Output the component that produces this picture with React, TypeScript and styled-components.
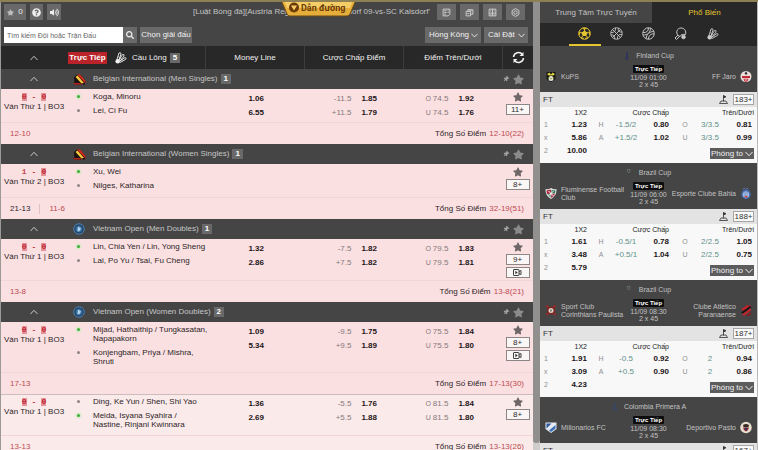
import React from 'react';
import styled, { createGlobalStyle, css } from 'styled-components';
import { FaStar, FaQuestionCircle, FaSearch, FaThumbtack, FaVolumeUp } from 'react-icons/fa';

const GlobalStyle = createGlobalStyle`
  *, *::before, *::after { box-sizing: border-box; }
  body { margin: 0; background: #444; font-family: 'Liberation Sans', Arial, sans-serif; font-size: 8px; line-height: 10px; }
  button, input, select { font: inherit; margin: 0; padding: 0; border: 0; border-radius: 0; }
  button { cursor: pointer; background: none; color: inherit; }
  svg { display: block; flex: none; }
  h2, h3, p { margin: 0; font: inherit; }
`;

/* ---------- page shell ---------- */

const Page = styled.div`
  position: relative;
  height: 100vh;
  overflow: hidden;
  display: grid;
  grid-template-columns: minmax(0, 1fr) 7px minmax(180px, 218px);
  border-top: 2px solid #8d8054;
`;

const Main = styled.main`
  min-width: 0;
  overflow: hidden;
  display: flex;
  flex-direction: column;
  border-left: 1px solid #9c9a96;
  background: #454545;
`;

const ScrollGutter = styled.div`
  background: #cfcccb;
  padding-bottom: 7px;
  display: flex;
`;

const ScrollThumb = styled.div`
  flex: 1;
  border-radius: 0 0 3px 3px;
  background: #91908e;
`;

const Ribbon = styled.button`
  position: absolute;
  top: -2px;
  left: 281px;
  width: 75px;
  height: 17px;
  color: #6b3a05;
  font-family: Roboto, sans-serif;
  font-size: 9px;
  font-weight: 700;
`;

const RibbonShape = styled.svg`
  position: absolute;
  inset: 0;
`;

const RibbonText = styled.span`
  position: relative;
  display: block;
  padding: 0 0 2px 20px;
  text-align: left;
  white-space: nowrap;
`;

/* ---------- toolbars ---------- */

const Toolbar = styled.div`
  display: flex;
  align-items: center;
  gap: 4px;
  padding: 2px 8px 0 3px;
`;

const SearchBar = styled(Toolbar)`
  gap: 3px;
  padding: 7px 5px 3px 3px;
`;

const ToolButton = styled.button<{ $w: number }>`
  width: ${(p) => p.$w}px;
  height: 16px;
  display: flex;
  align-items: center;
  justify-content: center;
  gap: 4px;
  flex: none;
  background: #696969;
  color: #efefef;
  white-space: nowrap;
`;

const Marquee = styled.div`
  flex: 1;
  min-width: 0;
  display: flex;
  justify-content: space-between;
  padding: 0 3px 0 128px;
  color: #c4c4c4;
  white-space: nowrap;
`;

const SearchForm = styled.form`
  display: flex;
`;

const SearchInput = styled.input`
  width: 119px;
  height: 16px;
  padding: 0 3px;
  background: #fff;
  color: #333;
  font-size: 7px;
  outline: none;
  &::placeholder { color: #666; opacity: 1; }
`;

const Spacer = styled.div`
  flex: 1;
`;

const SelectWrap = styled.label<{ $w: number }>`
  position: relative;
  width: ${(p) => p.$w}px;
  height: 16px;
  color: #f0f0f0;
  svg { position: absolute; right: 3px; top: 5px; pointer-events: none; }
`;

const Select = styled.select`
  appearance: none;
  width: 100%;
  height: 100%;
  padding: 0 0 0 4px;
  background: #696969;
  color: #f0f0f0;
`;

/* ---------- odds list ---------- */

const columns = css`
  display: grid;
  grid-template-columns: 204px repeat(3, minmax(0, 1fr)) 31px;
`;

const ListHeader = styled.div`
  ${columns}
  height: 23px;
  flex: none;
  background: #282828;
  color: #f1f1f1;
`;

const HeaderCell = styled.div`
  display: flex;
  align-items: center;
  justify-content: center;
  border-left: 1px solid #3d3d3d;
`;

const HeaderTitle = styled.div`
  display: flex;
  align-items: center;
`;

const CollapseButton = styled.button`
  width: 66px;
  height: 16px;
  display: flex;
  align-items: center;
  justify-content: center;
  flex: none;
  color: #c9c9c9;
`;

const LiveTag = styled.span`
  width: 39px;
  margin: 0 8px 0 1px;
  background: #b92329;
  color: #fff;
  font-weight: 700;
  text-align: center;
  line-height: 12px;
`;

const Count = styled.span`
  margin-left: 3px;
  padding: 0 3px;
  background: #696969;
  color: #fff;
  font-weight: 700;
`;

const SportName = styled.span`
  margin-left: 5px;
`;

const GroupBar = styled.div`
  display: flex;
  align-items: center;
  height: 20px;
  flex: none;
  padding-right: 9px;
  background: #454545;
  color: #c6c6c6;
`;

const GroupIcon = styled.span`
  width: 26px;
  padding-left: 6px;
`;

const GroupTools = styled.div`
  margin-left: auto;
  display: flex;
  align-items: center;
  gap: 4px;
  color: #a2a2a2;
`;

const IconButton = styled.button`
  display: block;
  color: inherit;
`;

const Match = styled.article<{ $pale?: boolean }>`
  flex: none;
  background: ${(p) => (p.$pale ? '#fbeaea' : '#fbe0e2')};
  color: #2b2426;
  & + & { box-shadow: inset 0 1px #cdbcbd; }
`;

const MatchBody = styled.div`
  ${columns}
  min-height: 33px;
`;

const MatchInfo = styled.div`
  display: grid;
  grid-template-columns: 66px minmax(0, 1fr);
`;

const ScoreBlock = styled.div`
  padding-top: 4px;
  display: flex;
  flex-direction: column;
  align-items: center;
  gap: 1px;
  white-space: nowrap;
`;

const Score = styled.div`
  display: flex;
  gap: 5px;
  color: #c4323b;
  font-family: 'Liberation Mono', monospace;
  font-weight: 700;
  line-height: 8px;
`;

const Digit = styled.span<{ $plain: boolean }>`
  line-height: 7px;
  background: ${(p) => (p.$plain ? 'transparent' : '#e3949b')};
  color: ${(p) => (p.$plain ? '#c24a50' : '#c0202c')};
`;

const Players = styled.div`
  display: flex;
  flex-direction: column;
  gap: 5px;
  padding: 3px 0 6px 10px;
`;

const Player = styled.div<{ $serving: boolean }>`
  display: flex;
  gap: 13px;
  line-height: 9px;
  &::before {
    content: '';
    flex: none;
    width: 3px;
    height: 3px;
    margin-top: 3px;
    border-radius: 50%;
    background: ${(p) => (p.$serving ? '#3fae3a' : '#8f8385')};
    box-shadow: ${(p) => (p.$serving ? '0 0 2px 1px #c2ecb8' : 'none')};
  }
`;

const PlayerName = styled.span`
  flex: none;
  max-width: 115px;
`;

const OddsCell = styled.div<{ $end: number }>`
  padding: 3px ${(p) => p.$end}px 0 0;
`;

const OddsLine = styled.div`
  display: flex;
  justify-content: flex-end;
  gap: 10px;
  line-height: 14px;
`;

const Handicap = styled.span`
  color: #84797b;
  white-space: nowrap;
`;

const Side = styled.small`
  font-size: 7px;
  margin-right: 2px;
`;

const Price = styled.button`
  color: #1c1517;
  font-weight: 700;
  line-height: inherit;
`;

const MatchTools = styled.div`
  display: flex;
  flex-direction: column;
  align-items: center;
  gap: 2px;
  padding: 3px 0 2px;
  color: #6f6668;
`;

const MoreButton = styled.button`
  width: 24px;
  height: 11px;
  display: flex;
  align-items: center;
  justify-content: center;
  border: 1px solid #8d8687;
  background: #fbf6f6;
  color: #2c2c2c;
`;

const MatchFooter = styled.div`
  display: flex;
  align-items: center;
  height: 22px;
  padding: 0 9px;
  border-top: 1px solid #f3d4d7;
`;

const GameScore = styled.span<{ $done?: boolean }>`
  color: ${(p) => (p.$done ? '#2b2426' : '#bb4a50')};
  & + & { margin-left: 9px; padding-left: 9px; border-left: 1px solid #e3bfc2; }
`;

const Total = styled.span`
  margin-left: auto;
  b { font-weight: 400; color: #bb4a50; margin-left: 1px; }
`;

/* ---------- side panel ---------- */

const SidePanel = styled.aside`
  overflow: hidden;
  background: #454545;
  border-right: 1px solid #b9b9b9;
`;

const Tabs = styled.div`
  display: grid;
  grid-template-columns: 112px 1fr;
`;

const Tab = styled.button<{ $active?: boolean }>`
  height: 21px;
  background: ${(p) => (p.$active ? '#282828' : '#454545')};
  color: ${(p) => (p.$active ? '#e6c62f' : '#c4c4c4')};
`;

const SportNav = styled.nav`
  display: flex;
  justify-content: center;
  height: 23px;
  background: #282828;
`;

const SportButton = styled.button<{ $active?: boolean }>`
  width: 32px;
  display: flex;
  align-items: center;
  justify-content: center;
  color: ${(p) => (p.$active ? '#e6c62f' : '#c9c9c9')};
  border-bottom: 2px solid ${(p) => (p.$active ? '#e6c62f' : 'transparent')};
`;

const CardHead = styled.header`
  padding: 5px 5px 4px;
  background: #454545;
  color: #c2c2c2;
  font-size: 7px;
`;

const League = styled.h3`
  display: flex;
  align-items: center;
  justify-content: center;
  gap: 6px;
  line-height: 9px;
  margin-bottom: 5px;
`;

const Versus = styled.div`
  display: grid;
  grid-template-columns: minmax(0, 1fr) 34px minmax(0, 1fr);
  gap: 2px;
  height: 23px;
`;

const Team = styled.div<{ $away?: boolean }>`
  display: flex;
  flex-direction: ${(p) => (p.$away ? 'row-reverse' : 'row')};
  align-items: center;
  gap: 4px;
  line-height: 8px;
  text-align: ${(p) => (p.$away ? 'right' : 'left')};
`;

const Kickoff = styled.div`
  display: flex;
  flex-direction: column;
  align-items: center;
  line-height: 7px;
  white-space: nowrap;
`;

const LiveBadge = styled.span`
  padding: 0 2px;
  margin-bottom: 1px;
  border-radius: 1px;
  background: #0d0d0d;
  color: #fff;
  font-size: 6px;
  font-weight: 700;
  line-height: 8px;
`;

const PeriodBar = styled.div`
  display: flex;
  align-items: center;
  gap: 5px;
  height: 15px;
  padding: 0 3px;
  background: #e3e3e3;
  color: #333;
`;

const MarketCount = styled.button`
  width: 21px;
  height: 11px;
  border: 1px solid #a5a5a5;
  background: #fafafa;
  color: #333;
  white-space: nowrap;
`;

const OddsTable = styled.table`
  width: 100%;
  table-layout: fixed;
  border-collapse: collapse;
  background: #f8f8f8;
  color: #222;
  th { font-weight: 400; font-size: 7px; height: 11px; line-height: 11px; padding: 0 1px 0 0; text-align: right; white-space: nowrap; }
  th:last-child { padding-right: 3px; }
  td { height: 13px; line-height: 13px; padding: 0; text-align: center; vertical-align: top; white-space: nowrap; }
  tr:last-child td { height: 19px; }
`;

const Mark = styled.td`
  color: #8f8f8f;
  font-size: 7px;
`;

const FirstMark = styled(Mark)`
  && { text-align: left; padding-left: 4px; }
`;

const Line = styled.td`
  color: #5f918a;
`;

const PriceCell = styled.td<{ $end?: number }>`
  && { text-align: right; padding-right: ${(p) => p.$end ?? 1}px; }
`;

const ExpandCell = styled.td`
  && { vertical-align: middle; padding-right: 3px; }
`;

const ExpandButton = styled.button`
  margin-left: auto;
  height: 11px;
  width: 44px;
  display: flex;
  align-items: center;
  justify-content: center;
  gap: 2px;
  background: #5c5c5c;
  color: #f1f1f1;
`;

/* ---------- drawings ---------- */

const Chevron = ({ up, size = 8 }: { up?: boolean; size?: number }) => (
  <svg width={size} height={size} viewBox="0 0 8 8" fill="none" stroke="currentColor" strokeWidth="1">
    <path d={up ? 'M0.5 6 L4 2.3 L7.5 6' : 'M0.5 2 L4 5.7 L7.5 2'} />
  </svg>
);

const Shuttle = ({ size = 12 }: { size?: number }) => (
  <svg width={size} height={size} viewBox="0 0 24 24" fill="none" stroke="currentColor" strokeWidth="1.8" strokeLinejoin="round">
    <path d="M4 15 L8 2 Q12 0 12 4 L8 16" />
    <path d="M8 16 L15 5 Q19 4 18 8 L10 18" />
    <path d="M10 18 L20 11 Q24 12 21 15 L10 21" />
    <path d="M6 9 L11 12 L15 17" strokeWidth="1.2" />
    <circle cx="5.5" cy="18.5" r="4.6" fill="currentColor" stroke="none" />
  </svg>
);

const SoccerBall = () => (
  <svg width="13" height="13" viewBox="0 0 26 26" fill="none" stroke="currentColor" strokeWidth="2">
    <circle cx="13" cy="13" r="11.5" />
    <path d="M13 8 L18 11.6 L16 17 H10 L8 11.6 Z" fill="currentColor" />
    <path d="M13 8 V4 M18 12 L22 10 M16 17 L19 21 M10 17 L7 21 M8 12 L4 10" />
    <path d="M9 2.5 L13 5 L17 2.5 Z M23.5 9 L22 14 L24 16 Z M2.5 9 L4 14 L2 16 Z M6 21 L11 22 L10 24 Z M20 21 L15 22 L16 24 Z" fill="currentColor" strokeWidth="1" />
  </svg>
);

const Basketball = () => (
  <svg width="13" height="13" viewBox="0 0 26 26" fill="none" stroke="currentColor" strokeWidth="1.8">
    <circle cx="13" cy="13" r="11.5" />
    <path d="M5 5 L21 21 M21 5 L5 21 M11 2 C12 7 9 12 2 11 M24 15 C18 14 14 18 15 24 M17 2.5 C15 7 19 11 24 10 M2 16 C7 15 11 19 9 24" />
  </svg>
);

const TennisBall = () => (
  <svg width="13" height="13" viewBox="0 0 26 26" fill="none" stroke="currentColor" strokeWidth="2">
    <circle cx="13" cy="13" r="11.5" />
    <path d="M2 11 C9 12 13 8 13 2 M17 2.5 C17 11 11 16 2.5 16 M24 14 C17 13 13 18 13 24 M8 23 C9 15 15 9 23.5 9" />
  </svg>
);

const Paddle = () => (
  <svg width="13" height="13" viewBox="0 0 26 26" fill="none" stroke="currentColor" strokeWidth="2">
    <path d="M8 17 C3 11 6 2 14 2 C21 2 25 8 23 15 C19 14 13 15 12 19 Z" />
    <path d="M8 16 L2 22 L5 25 L11 19" />
    <circle cx="19" cy="20" r="3.5" fill="currentColor" />
  </svg>
);

const Refresh = () => (
  <svg width="13" height="13" viewBox="0 0 26 26" fill="none" stroke="currentColor" strokeWidth="3">
    <path d="M3 12 A10 10 0 0 1 21 7 M23 14 A10 10 0 0 1 5 19" />
    <path d="M23 2 V10 H15 Z M3 24 V16 H11 Z" fill="currentColor" stroke="none" />
  </svg>
);

const VideoIcon = () => (
  <svg width="9" height="7" viewBox="0 0 18 14" fill="none" stroke="currentColor" strokeWidth="1.8">
    <rect x="1" y="1" width="11" height="12" rx="1" />
    <path d="M5 4 L9 7 L5 10 Z" fill="currentColor" strokeWidth="0.5" />
    <path d="M12 5 L16 3 V11 L12 9" />
  </svg>
);

const CornerFlag = () => (
  <svg width="9" height="9" viewBox="0 0 18 18" fill="none" stroke="#333" strokeWidth="1.6">
    <path d="M9 1 V13 M1 17 L4 12 H14 L17 17 Z" />
    <path d="M9 1 L14 3.5 L9 6 Z" fill="#333" />
  </svg>
);

const BelgianFlag = () => (
  <svg width="13" height="11" viewBox="0 0 26 22">
    <path d="M2 6 L8 1 L15 2 L25 15 L24 21 L3 21 Z" fill="#1a1311" />
    <path d="M8 1 L14 1 L25 14 L25 19 Z" fill="#d8281c" />
    <path d="M5 6 L9 3 L22 18 L17 19 Z" fill="#f5c93c" />
    <path d="M1 18 L13 18 L20 21 L2 21 Z" fill="#b81f1a" />
  </svg>
);

const VietnamOpen = () => (
  <svg width="12" height="12" viewBox="0 0 24 24" fill="none" stroke="#4a86bd">
    <circle cx="12" cy="12" r="10.5" strokeWidth="2" fill="#27415c" />
    <circle cx="12" cy="12" r="7" fill="#3d78ad" stroke="#1f3c58" />
    <path d="M9 17 L10 7 L16 11 L13 16 Z" fill="#b5d3ea" stroke="none" />
  </svg>
);

const toolIcons = [
  <path key="list" d="M2 2 H14 V11 L11 14 H2 Z M4 5 H8 M4 8 H8 M4 11 H7 M10 5 H12 M10 8 H12" />,
  <path key="bets" d="M2 6 H10 V14 H2 Z M5 6 V3 H14 V11 H10 M7 5 H12 M4 10 H8" />,
  <path key="result" d="M2 2 H14 V14 H2 Z M8 2 V14 M2 9 H14 M4 5 H6 M10 5 H12 M4 12 H6 M10 12 H12" />,
  <path key="gear" d="M8 1 L14 4.5 V11.5 L8 15 L2 11.5 V4.5 Z M8 5 A3 3 0 1 0 8 11 A3 3 0 1 0 8 5" />,
];

const crests: Record<string, React.ReactNode> = {
  kups: (
    <>
      <path d="M3 3 H21 V17 L12 23 L3 17 Z" fill="#141414" />
      <path d="M4 7 L9 4 L12 8 L15 4 L20 7 L17 10 H7 Z" fill="#d7cf3c" />
      <circle cx="12" cy="16" r="5" fill="#e8e8d8" />
      <path d="M5 13 L9 14 L7 19 Z M19 13 L15 14 L17 19 Z M10 15 H14 L12 18 Z" fill="#64762a" />
    </>
  ),
  jaro: (
    <>
      <circle cx="12" cy="12" r="11" fill="#ecdcdc" />
      <path d="M12 2 L15 6 L12 9 L9 6 Z" fill="#333" />
      <path d="M4 11 H20 V15 H4 Z" fill="#c22a35" />
      <path d="M8 16 L10 22 M12 16 V23 M16 16 L14 22" stroke="#c22a35" strokeWidth="2" />
    </>
  ),
  flu: (
    <>
      <path d="M1 3 Q6 5 12 1 Q18 5 23 3 Q24 16 12 23 Q0 16 1 3 Z" fill="#e9e9e9" />
      <path d="M3 6 L12 4 V12 L4 13 Z" fill="#a5283c" />
      <path d="M13 13 L20 12 L18 17 L12 21 Z" fill="#a5283c" />
      <path d="M13 5 L21 6 L20 11 L13 12 Z M5 14 L11 13 V20 Z" fill="#2b7a55" />
      <path d="M7 7 L17 17 M17 7 L7 17" stroke="#fff" strokeWidth="2" />
    </>
  ),
  bahia: (
    <>
      <path d="M6 5 L8 1 L11 4 L14 1 L17 4" stroke="#5a6fae" strokeWidth="2" fill="none" />
      <circle cx="12" cy="14" r="9.5" fill="#456fb5" />
      <circle cx="12" cy="14" r="6" fill="#dfe5f0" />
      <path d="M7 11 H17 M7 15 H17" stroke="#456fb5" strokeWidth="2" />
      <path d="M9 17 H15 V20 H9 Z" fill="#c23c42" />
    </>
  ),
  cor: (
    <>
      <path d="M3 2 L21 21 M21 2 L3 21" stroke="#9c2a2a" strokeWidth="4" />
      <circle cx="12" cy="12" r="8" fill="#7c2523" />
      <circle cx="12" cy="12" r="5" fill="#ddd3c8" />
      <path d="M10 10 H14 V13 L12 15 L10 13 Z" fill="#8a8070" />
    </>
  ),
  cap: (
    <>
      <path d="M2 10 L13 2 H23 L8 13 Z" fill="#c5222b" />
      <path d="M2 16 L20 3 L23 5 L6 18 Z" fill="#171212" />
      <path d="M3 21 L22 7 V12 L9 22 Z" fill="#c5222b" />
      <path d="M12 23 L22 15 V20 L18 23 Z" fill="#8a1a20" />
    </>
  ),
  mil: (
    <>
      <path d="M1 2 H23 V15 L12 23 L1 15 Z" fill="#e6ebf2" />
      <path d="M3 4 H13 L3 14 Z" fill="#2c5799" />
      <path d="M21 7 V14 L12 21 L8 18 Z" fill="#3b6fb5" />
    </>
  ),
  pasto: (
    <>
      <circle cx="12" cy="12" r="11.5" fill="#e9dfcf" />
      <path d="M6 7 Q12 3 18 7 L17 11 H7 Z" fill="#3a2b22" />
      <path d="M6 12 H18 L16 17 L12 20 L8 17 Z" fill="#8c2430" />
      <path d="M10 12 H14 V17 H10 Z" fill="#33386b" />
    </>
  ),
};

const Crest = ({ id }: { id: string }) => (
  <svg width="12" height="13" viewBox="0 0 24 24">{crests[id]}</svg>
);

const LeagueMark = ({ kind }: { kind: string }) => (
  <svg width="7" height="9" viewBox="0 0 14 18" fill="none">
    {kind === 'fin' && <path d="M6 2 H10 V12 L12 17 H3 L6 12 Z" fill="#30355a" />}
    {kind === 'bra' && <path d="M3 3 H8 V7 L6 10 L3 7 Z" stroke="#6f7d7c" strokeWidth="1.4" />}
    {kind === 'col' && <path d="M9 1 L7 10 L12 15 H3 M7 3 L5 13" stroke="#31476b" strokeWidth="2" />}
  </svg>
);

/* ---------- data ---------- */

type MatchData = {
  score: [string, string];
  period: string;
  players: [string, string];
  serving: 0 | 1;
  money?: [string, string];
  hcp?: [string, string][];
  total?: [string, string][];
  more: string;
  video?: boolean;
  games: string[];
  sum: string;
  pale?: boolean;
};

const groups: { name: string; icon: 'be' | 'vn'; count: number; matches: MatchData[] }[] = [
  {
    name: 'Belgian International (Men Singles)', icon: 'be', count: 1,
    matches: [{
      score: ['0', '0'], period: 'Ván Thứ 1 | BO3', players: ['Koga, Minoru', 'Lei, Ci Fu'], serving: 0,
      money: ['1.06', '6.55'], hcp: [['-11.5', '1.85'], ['+11.5', '1.79']], total: [['74.5', '1.92'], ['74.5', '1.76']],
      more: '11+', games: ['12-10'], sum: '12-10(22)',
    }],
  },
  {
    name: 'Belgian International (Women Singles)', icon: 'be', count: 1,
    matches: [{
      score: ['1', '0'], period: 'Ván Thứ 2 | BO3', players: ['Xu, Wei', 'Nilges, Katharina'], serving: 0,
      more: '8+', games: ['21-13', '11-6'], sum: '32-19(51)',
    }],
  },
  {
    name: 'Vietnam Open (Men Doubles)', icon: 'vn', count: 1,
    matches: [{
      score: ['0', '0'], period: 'Ván Thứ 1 | BO3', players: ['Lin, Chia Yen / Lin, Yong Sheng', 'Lai, Po Yu / Tsai, Fu Cheng'], serving: 0,
      money: ['1.32', '2.86'], hcp: [['-7.5', '1.82'], ['+7.5', '1.82']], total: [['79.5', '1.83'], ['79.5', '1.81']],
      more: '9+', video: true, games: ['13-8'], sum: '13-8(21)',
    }],
  },
  {
    name: 'Vietnam Open (Women Doubles)', icon: 'vn', count: 2,
    matches: [
      {
        score: ['0', '0'], period: 'Ván Thứ 1 | BO3', players: ['Mijad, Hathaithip / Tungkasatan, Napapakorn', 'Konjengbam, Priya / Mishra, Shruti'], serving: 0,
        money: ['1.09', '5.34'], hcp: [['-9.5', '1.75'], ['+9.5', '1.89']], total: [['75.5', '1.84'], ['75.5', '1.80']],
        more: '8+', video: true, games: ['17-13'], sum: '17-13(30)',
      },
      {
        score: ['0', '0'], period: 'Ván Thứ 1 | BO3', players: ['Ding, Ke Yun / Shen, Shi Yao', 'Meida, Isyana Syahira / Nastine, Rinjani Kwinnara'], serving: 1,
        money: ['1.36', '2.69'], hcp: [['-5.5', '1.76'], ['+5.5', '1.88']], total: [['81.5', '1.84'], ['81.5', '1.80']],
        more: '8+', games: ['13-13'], sum: '13-13(26)', pale: true,
      },
    ],
  },
];

type Market = { win: string[]; hcp: [string, string][]; ou: [string, string][] };

type CardData = {
  league: string; mark: string; home: [string, string]; away: [string, string]; time: string; count: string;
  market?: Market;
};

const cards: CardData[] = [
  { league: 'Finland Cup', mark: 'fin', home: ['KuPS', 'kups'], away: ['FF Jaro', 'jaro'], time: '11/09 01:00', count: '183+', market: { win: ['1.23', '5.86', '10.00'], hcp: [['-1.5/2', '0.80'], ['+1.5/2', '1.02']], ou: [['3/3.5', '0.81'], ['3/3.5', '0.99']] } },
  { league: 'Brazil Cup', mark: 'bra', home: ['Fluminense Football Club', 'flu'], away: ['Esporte Clube Bahia', 'bahia'], time: '11/09 06:00', count: '188+', market: { win: ['1.61', '3.48', '5.79'], hcp: [['-0.5/1', '0.78'], ['+0.5/1', '1.04']], ou: [['2/2.5', '1.05'], ['2/2.5', '0.75']] } },
  { league: 'Brazil Cup', mark: 'bra', home: ['Sport Club Corinthians Paulista', 'cor'], away: ['Clube Atletico Paranaense', 'cap'], time: '11/09 08:30', count: '187+', market: { win: ['1.91', '3.09', '4.23'], hcp: [['-0.5', '0.92'], ['+0.5', '0.90']], ou: [['2', '0.94'], ['2', '0.86']] } },
  { league: 'Colombia Primera A', mark: 'col', home: ['Millonarios FC', 'mil'], away: ['Deportivo Pasto', 'pasto'], time: '11/09 08:30', count: '167+' },
];

/* ---------- composed parts ---------- */

const MatchRow = ({ m }: { m: MatchData }) => (
  <Match $pale={m.pale}>
    <MatchBody>
      <MatchInfo>
        <ScoreBlock>
          <Score>
            <Digit $plain={m.score[0] !== '0'}>{m.score[0]}</Digit>
            <span>-</span>
            <Digit $plain={m.score[1] !== '0'}>{m.score[1]}</Digit>
          </Score>
          <span>{m.period}</span>
        </ScoreBlock>
        <Players>
          {m.players.map((name, i) => (
            <Player key={name} $serving={m.serving === i}>
              <PlayerName>{name}</PlayerName>
            </Player>
          ))}
        </Players>
      </MatchInfo>
      <OddsCell $end={40}>
        {m.money?.map((p) => <OddsLine key={p}><Price>{p}</Price></OddsLine>)}
      </OddsCell>
      <OddsCell $end={26}>
        {m.hcp?.map(([h, p]) => <OddsLine key={h}><Handicap>{h}</Handicap><Price>{p}</Price></OddsLine>)}
      </OddsCell>
      <OddsCell $end={28}>
        {m.total?.map(([h, p], i) => (
          <OddsLine key={i}><Handicap><Side>{i ? 'U' : 'O'}</Side>{h}</Handicap><Price>{p}</Price></OddsLine>
        ))}
      </OddsCell>
      <MatchTools>
        <IconButton aria-label="Yêu thích"><FaStar size={10} /></IconButton>
        <MoreButton>{m.more}</MoreButton>
        {m.video && <MoreButton aria-label="Video"><VideoIcon /></MoreButton>}
      </MatchTools>
    </MatchBody>
    <MatchFooter>
      {m.games.map((g, i) => <GameScore key={g} $done={i < m.games.length - 1}>{g}</GameScore>)}
      <Total>Tổng Số Điểm <b>{m.sum}</b></Total>
    </MatchFooter>
  </Match>
);

const MarketTable = ({ market }: { market: Market }) => (
  <OddsTable>
    <colgroup>
      {[20, 28, 26, 24, 32, 30, 20, 37].map((w, i) => <col key={i} width={w} />)}
    </colgroup>
    <thead>
      <tr><th colSpan={2}>1X2</th><th colSpan={3}>Cược Chấp</th><th colSpan={3}>Trên/Dưới</th></tr>
    </thead>
    <tbody>
      {[0, 1].map((i) => (
        <tr key={i}>
          <FirstMark>{i ? 'x' : '1'}</FirstMark>
          <PriceCell><Price>{market.win[i]}</Price></PriceCell>
          <Mark>{i ? 'A' : 'H'}</Mark>
          <Line>{market.hcp[i][0]}</Line>
          <PriceCell><Price>{market.hcp[i][1]}</Price></PriceCell>
          <Mark>{i ? 'U' : 'O'}</Mark>
          <Line>{market.ou[i][0]}</Line>
          <PriceCell $end={5}><Price>{market.ou[i][1]}</Price></PriceCell>
        </tr>
      ))}
      <tr>
        <FirstMark>2</FirstMark>
        <PriceCell><Price>{market.win[2]}</Price></PriceCell>
        <ExpandCell colSpan={6}><ExpandButton>Phóng to <Chevron /></ExpandButton></ExpandCell>
      </tr>
    </tbody>
  </OddsTable>
);

const Card = ({ c }: { c: CardData }) => (
  <section>
    <CardHead>
      <League><LeagueMark kind={c.mark} />{c.league}</League>
      <Versus>
        <Team><Crest id={c.home[1]} /><span>{c.home[0]}</span></Team>
        <Kickoff><LiveBadge>Trực Tiếp</LiveBadge><span>{c.time}</span><span>2 x 45</span></Kickoff>
        <Team $away><Crest id={c.away[1]} /><span>{c.away[0]}</span></Team>
      </Versus>
    </CardHead>
    <PeriodBar>FT<Spacer /><CornerFlag /><MarketCount>{c.count}</MarketCount></PeriodBar>
    {c.market && <MarketTable market={c.market} />}
  </section>
);

export default function App() {
  return (
    <>
      <GlobalStyle />
      <Page>
        <Main>
          <Toolbar>
            <ToolButton $w={22} aria-label="Yêu thích"><FaStar size={7} color="#bdbdbd" /><span>0</span></ToolButton>
            <ToolButton $w={13} aria-label="Trợ giúp"><FaQuestionCircle size={9} /></ToolButton>
            <ToolButton $w={14} aria-label="Âm thanh"><FaVolumeUp size={9} /></ToolButton>
            <Marquee><span>[Luật Bóng đá][Austria Reg</span><span>dorf 09-vs-SC Kalsdorf'</span></Marquee>
            {toolIcons.map((icon, i) => (
              <ToolButton key={i} $w={19} aria-label={['Danh sách', 'Cược', 'Kết quả', 'Cài đặt'][i]}>
                <svg width="9" height="9" viewBox="0 0 16 16" fill="none" stroke="#d5d5d5" strokeWidth="1.6">{icon}</svg>
              </ToolButton>
            ))}
          </Toolbar>
          <SearchBar>
            <SearchForm>
              <SearchInput aria-label="Tìm kiếm" placeholder="Tìm kiếm Đội hoặc Trận Đấu" />
              <ToolButton type="button" $w={14} aria-label="Tìm"><FaSearch size={8} /></ToolButton>
            </SearchForm>
            <ToolButton $w={52}>Chọn giải đấu</ToolButton>
            <Spacer />
            <SelectWrap $w={56}>
              <Select aria-label="Loại tỷ lệ"><option>Hồng Kông</option></Select>
              <Chevron size={7} />
            </SelectWrap>
            <SelectWrap $w={44}>
              <Select aria-label="Cài đặt"><option>Cài Đặt</option></Select>
              <Chevron size={7} />
            </SelectWrap>
          </SearchBar>
          <ListHeader>
            <HeaderTitle>
              <CollapseButton aria-label="Thu gọn"><Chevron up /></CollapseButton>
              <LiveTag>Trực Tiếp</LiveTag>
              <Shuttle />
              <SportName>Cầu Lông</SportName>
              <Count>5</Count>
            </HeaderTitle>
            <HeaderCell>Money Line</HeaderCell>
            <HeaderCell>Cược Chấp Điểm</HeaderCell>
            <HeaderCell>Điểm Trên/Dưới</HeaderCell>
            <HeaderCell><IconButton aria-label="Làm mới"><Refresh /></IconButton></HeaderCell>
          </ListHeader>
          {groups.map((g) => (
            <React.Fragment key={g.name}>
              <GroupBar>
                <CollapseButton aria-label="Thu gọn"><Chevron up /></CollapseButton>
                <GroupIcon>{g.icon === 'be' ? <BelgianFlag /> : <VietnamOpen />}</GroupIcon>
                <h2>{g.name}</h2>
                <Count>{g.count}</Count>
                <GroupTools>
                  <IconButton aria-label="Ghim"><FaThumbtack size={6} transform="rotate(45)" /></IconButton>
                  <IconButton aria-label="Yêu thích"><FaStar size={11} color="#8b8b8b" /></IconButton>
                </GroupTools>
              </GroupBar>
              {g.matches.map((m) => <MatchRow key={m.players[0]} m={m} />)}
            </React.Fragment>
          ))}
        </Main>
        <ScrollGutter><ScrollThumb /></ScrollGutter>
        <SidePanel>
          <Tabs>
            <Tab>Trung Tâm Trực Tuyến</Tab>
            <Tab $active>Phổ Biến</Tab>
          </Tabs>
          <SportNav>
            <SportButton $active aria-label="Bóng đá"><SoccerBall /></SportButton>
            <SportButton aria-label="Bóng rổ"><Basketball /></SportButton>
            <SportButton aria-label="Quần vợt"><TennisBall /></SportButton>
            <SportButton aria-label="Bóng bàn"><Paddle /></SportButton>
            <SportButton aria-label="Cầu lông"><Shuttle size={12} /></SportButton>
          </SportNav>
          {cards.map((c, i) => <Card key={i} c={c} />)}
        </SidePanel>
        <Ribbon>
          <RibbonShape width="75" height="17" viewBox="0 0 75 17">
            <path d="M0 0 H75 L69 14 Q68 16 66 16 H9 Q7 16 6 14 Z" fill="#e5ad3a" stroke="#6a4a14" strokeWidth="1" />
            <path d="M3 1 H72 L69 8 H6 Z" fill="#f4cd67" />
            <circle cx="13" cy="7.5" r="5" fill="#6b3a05" />
            <path d="M10 5.5 H16 L13 10.5 Z" fill="#f4cd67" />
          </RibbonShape>
          <RibbonText>Dẫn đường</RibbonText>
        </Ribbon>
      </Page>
    </>
  );
}
